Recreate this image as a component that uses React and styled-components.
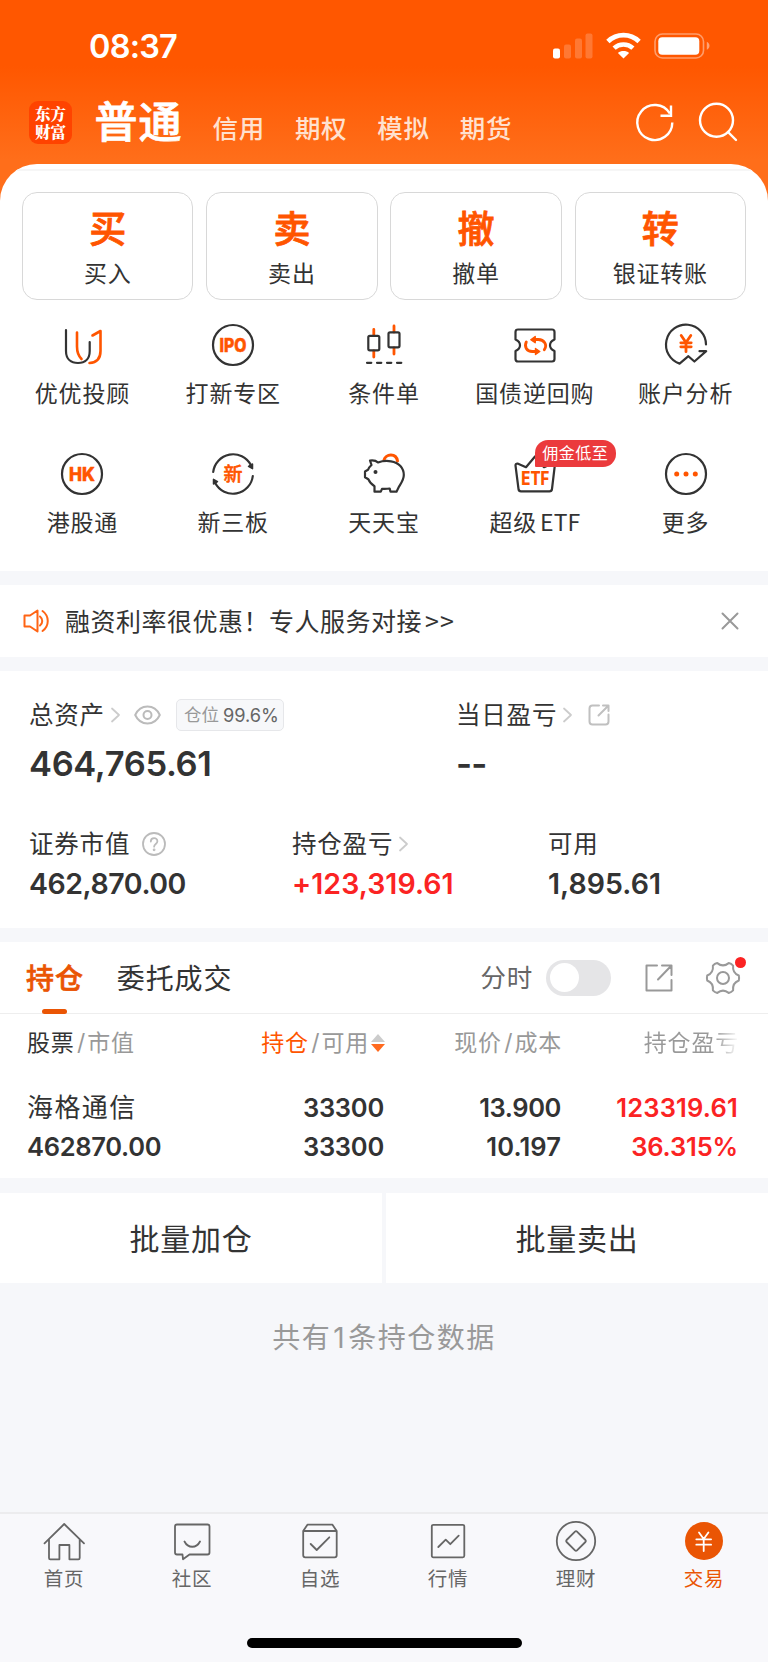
import styled, { createGlobalStyle, css } from "styled-components";

const GlobalStyle = createGlobalStyle`
  * {
    box-sizing: border-box;
  }
  body {
    margin: 0;
    background-color: #f6f7fa;
    color: #333333;
    font-family: Inter, "Noto Sans CJK SC", sans-serif;
  }
`;

const Page = styled.div`
  width: 768px;
  height: 1662px;
  display: flex;
  flex-direction: column;
  overflow: hidden;
`;

/* ---------- 상단 ---------- */
const Hero = styled.div`
  height: 571px;
  flex-shrink: 0;
  display: flex;
  flex-direction: column;
  background: linear-gradient(
    180deg,
    #ff5700 0,
    #ff5700 66px,
    #ff6e1a 160px,
    #ff6e1a 100%
  );
`;

const StatusBar = styled.div`
  height: 90px;
  display: flex;
  justify-content: space-between;
  align-items: center;
  padding: 1px 58px 0 89px;
`;

const Clock = styled.div`
  padding-top: 1px;
  color: #ffffff;
  font-size: 32.5px;
  font-weight: 600;
  letter-spacing: -0.8px;
`;

const NavBar = styled.div`
  height: 74px;
  display: flex;
  align-items: flex-start;
  padding: 0 30px 0 29px;
`;

const Logo = styled.div`
  width: 43px;
  height: 43px;
  margin-top: 11px;
  border-radius: 9px;
  background-color: #ff4300;
  color: #ffffff;
  text-align: center;
  padding-top: 3px;
  font-family: "Noto Serif CJK SC", "Noto Sans CJK SC", serif;
  font-size: 15.5px;
  font-weight: 900;
  line-height: 18px;
`;

const NavTitle = styled.div`
  margin: 4px 0 0 22.5px;
  color: #ffffff;
  font-size: 43px;
  font-weight: 500;
  line-height: 56px;
  letter-spacing: 1px;
  -webkit-text-stroke: 0.8px #ffffff;
`;

const NavTabs = styled.div`
  display: flex;
  gap: 30px;
  margin: 21px 0 0 30px;
`;

const NavTab = styled.div`
  color: #ffe1cf;
  font-size: 25.5px;
  font-weight: 500;
  line-height: 36px;
  letter-spacing: 0.7px;
`;

const NavIcons = styled.div`
  display: flex;
  gap: 20px;
  margin: 11px 0 0 auto;
`;

const Sheet = styled.div`
  flex: 1;
  background-color: #ffffff;
  border-radius: 37px 37px 0 0;
  overflow: hidden;
`;

const SheetEdge = styled.div`
  height: 7px;
  border-bottom: 2px solid #f6f6f6;
`;

const TradeGrid = styled.div`
  display: grid;
  grid-template-columns: repeat(4, 1fr);
  gap: 12.7px;
  padding: 0 22px;
  margin-top: 21px;
`;

const TradeButton = styled.div`
  height: 107.5px;
  border: 1px solid #d8d8d8;
  border-radius: 15px;
  padding-top: 15px;
  display: flex;
  flex-direction: column;
  align-items: center;
`;

const TradeChar = styled.div`
  color: #ff5500;
  font-size: 37px;
  font-weight: 500;
  line-height: 44px;
  -webkit-text-stroke: 0.8px #ff5500;
`;

const Label = styled.div`
  font-size: 23px;
  line-height: 30px;
  letter-spacing: 0.8px;
  white-space: nowrap;
`;

const TradeLabel = styled(Label)`
  margin-top: 7px;
`;

const FuncGrid = styled.div`
  display: grid;
  grid-template-columns: repeat(5, 1fr);
  grid-auto-rows: 129.3px;
  padding: 0 7px;
  margin-top: 24px;
`;

const FuncItem = styled.div`
  display: flex;
  flex-direction: column;
  align-items: center;
`;

const FuncIcon = styled.div`
  position: relative;
  width: 42px;
  height: 42px;
  margin-bottom: 13.5px;
`;

const Badge = styled.div`
  position: absolute;
  left: 21px;
  top: -13px;
  width: 81px;
  height: 27px;
  border-radius: 13px 13px 13px 1px;
  background-color: #eb3a3c;
  color: #ffffff;
  font-size: 16px;
  line-height: 27px;
  letter-spacing: 0.5px;
  text-align: center;
  white-space: nowrap;
`;

const LatinThin = styled.span`
  font-family: "Noto Sans CJK SC", sans-serif;
  line-height: 0;
  margin-left: 3px;
  letter-spacing: ${({ $track }) => $track || 0}px;
`;

/* ---------- 공지 ---------- */
const Notice = styled.div`
  height: 72px;
  flex-shrink: 0;
  margin-top: 14px;
  padding: 0 29px 0 23px;
  background-color: #ffffff;
  display: flex;
  align-items: center;
`;

const NoticeText = styled.div`
  flex: 1;
  margin-left: 16px;
  padding-top: 1px;
  font-size: 25px;
  line-height: 36px;
  letter-spacing: 0.5px;
`;

/* ---------- 자산 ---------- */
const Assets = styled.div`
  height: 257px;
  flex-shrink: 0;
  margin-top: 14px;
  padding: 24px 0 0 29px;
  background-color: #ffffff;
`;

const AssetRow = styled.div`
  display: grid;
  grid-template-columns: ${({ $cols }) => $cols};
  margin-top: ${({ $top }) => $top || 0}px;
`;

const AssetLabel = styled.div`
  height: 40px;
  display: flex;
  align-items: center;
  font-size: 24.5px;
  line-height: 39px;
  letter-spacing: 0.8px;
`;

const AssetValue = styled.div`
  font-weight: 600;
  ${({ $big }) =>
    $big
      ? css`
          font-size: 34.5px;
          line-height: 50px;
          margin-top: 4px;
        `
      : css`
          font-size: 28.5px;
          line-height: 40px;
        `}
  letter-spacing: ${({ $track }) => $track || 0}px;
  color: ${({ $red }) => ($red ? "#fb2323" : "#333333")};
`;

const Position = styled.div`
  height: 32px;
  margin-left: 15px;
  padding: 0 4px 0 7px;
  border: 1px solid #e6e7ea;
  border-radius: 5px;
  background-color: #f7f8fa;
  display: flex;
  align-items: center;
  gap: 4px;
  color: #999999;
  font-size: 17.5px;
  line-height: 30px;
  letter-spacing: 0;
`;

const PositionRate = styled.span`
  color: #666666;
  font-size: 18.2px;
`;

/* ---------- 보유 종목 ---------- */
const Holdings = styled.div`
  height: 236px;
  flex-shrink: 0;
  margin-top: 14px;
  background-color: #ffffff;
`;

const HoldTabs = styled.div`
  height: 72px;
  border-bottom: 1px solid #eeeeee;
  display: flex;
  align-items: center;
  padding: 0 27px 0 26px;
`;

const HoldTab = styled.div`
  position: relative;
  height: 72px;
  padding-top: 1px;
  margin-right: 33px;
  font-size: 28px;
  line-height: 72px;
  letter-spacing: 0.9px;
  color: ${({ $active }) => ($active ? "#ea5504" : "#333333")};
  font-weight: ${({ $active }) => ($active ? 500 : 400)};
  -webkit-text-stroke: ${({ $active }) => ($active ? "0.6px #ea5504" : "0")};
  &::after {
    content: "";
    display: ${({ $active }) => ($active ? "block" : "none")};
    position: absolute;
    left: 16px;
    bottom: 0;
    width: 25px;
    height: 5px;
    border-radius: 2.5px;
    background-color: #ea5504;
  }
`;

const HoldTools = styled.div`
  margin-left: auto;
  display: flex;
  align-items: center;
  color: #666666;
  font-size: 25.5px;
  line-height: 36px;
  letter-spacing: 0.8px;
`;

const Toggle = styled.div`
  width: 65px;
  height: 36px;
  margin: 0 34px 0 13px;
  padding: 3.5px;
  border-radius: 18px;
  background-color: #e5e5e7;
`;

const Knob = styled.div`
  width: 29px;
  height: 29px;
  border-radius: 50%;
  background-color: #ffffff;
`;

const GearWrap = styled.div`
  position: relative;
  width: 36px;
  height: 36px;
  margin-left: 32px;
`;

const RedDot = styled.div`
  position: absolute;
  right: -5px;
  top: -3px;
  width: 11px;
  height: 11px;
  border-radius: 50%;
  background-color: #fb2323;
`;

const TableRow = styled.div`
  display: grid;
  grid-template-columns: 234px 123px 177px 177px;
  padding-left: 27px;
`;

const TableHead = styled(TableRow)`
  height: 58px;
  align-items: center;
  font-size: 23px;
  line-height: 32px;
  letter-spacing: 0.8px;
  color: #999999;
`;

const HeadCell = styled.div`
  display: flex;
  align-items: center;
  justify-content: ${({ $left }) => ($left ? "flex-start" : "flex-end")};
  margin-right: -1px;
  white-space: nowrap;
`;

const HeadMain = styled.span`
  color: ${({ $color }) => $color};
`;

const Slash = styled.span`
  margin: 0 1px 0 2.5px;
`;

const FadeText = styled.span`
  color: transparent;
  background: linear-gradient(90deg, #999999 74%, #ffffff 100%);
  background-clip: text;
  -webkit-background-clip: text;
`;

const TableBody = styled(TableRow)`
  padding-top: 17px;
`;

const Cell = styled.div`
  font-size: 25.5px;
  font-weight: 600;
  line-height: 38.5px;
  text-align: ${({ $left }) => ($left ? "left" : "right")};
  color: ${({ $red }) => ($red ? "#fb2323" : "#333333")};
`;

const Num = styled.div`
  letter-spacing: ${({ $track }) => $track}px;
`;

const StockName = styled.div`
  font-size: 26px;
  font-weight: 400;
  letter-spacing: 1.4px;
`;

/* ---------- 하단 ---------- */
const BatchRow = styled.div`
  display: grid;
  grid-template-columns: 1fr 1fr;
  gap: 4px;
  height: 90px;
  margin-top: 15px;
  flex-shrink: 0;
`;

const BatchButton = styled.div`
  background-color: #ffffff;
  display: flex;
  align-items: center;
  justify-content: center;
  padding-top: 1px;
  font-size: 30px;
  line-height: 40px;
  letter-spacing: 0.8px;
`;

const CountText = styled.div`
  flex: 1;
  padding-top: 35px;
  text-align: center;
  color: #999999;
  font-size: 28px;
  line-height: 40px;
  letter-spacing: 1.5px;
`;

const CountNum = styled.span`
  margin: 0 2px;
`;

const TabBar = styled.div`
  height: 150px;
  flex-shrink: 0;
  border-top: 2px solid #ececee;
  background-color: #f8f8fb;
  display: flex;
  flex-direction: column;
  align-items: center;
`;

const TabList = styled.div`
  width: 100%;
  height: 124px;
  display: grid;
  grid-template-columns: repeat(6, 1fr);
`;

const TabItem = styled.div`
  padding-top: 6px;
  display: flex;
  flex-direction: column;
  align-items: center;
  color: ${({ $active }) => ($active ? "#ea5504" : "#666666")};
  font-size: 19.5px;
  line-height: 34px;
  letter-spacing: 0.7px;
`;

const HomeIndicator = styled.div`
  width: 275px;
  height: 10px;
  border-radius: 5px;
  background-color: #000000;
`;

const Svg = styled.svg`
  display: block;
  flex-shrink: 0;
  overflow: visible;
  fill: none;
  stroke: ${({ $stroke }) => $stroke || "#333333"};
  stroke-width: ${({ $w }) => $w || 2}px;
  stroke-linecap: round;
  stroke-linejoin: round;
  margin-left: ${({ $ml }) => $ml || 0}px;
`;

const IconText = styled.text`
  fill: #ff5500;
  stroke: ${({ $halo }) => ($halo ? "#ffffff" : "#ff5500")};
  stroke-width: ${({ $halo }) => ($halo ? 4 : 0.5)}px;
  paint-order: stroke;
  font-family: Inter, "Noto Sans CJK SC", sans-serif;
  font-weight: ${({ $weight }) => $weight || 800};
  text-anchor: middle;
`;

const ORANGE = "#ff5500";

const Box = ({ children, ...rest }) => (
  <Svg width="42" height="42" viewBox="0 0 42 42" $w={2.2} {...rest}>
    {children}
  </Svg>
);

const StatusIcons = () => (
  <Svg width="157" height="28" viewBox="0 0 157 28" $stroke="none">
    <g fill="#ffffff">
      <rect x="0" y="16.500" width="7" height="10" rx="2" />
      <rect x="11" y="12.500" width="7" height="14" rx="2" opacity="0.2" />
      <rect x="22" y="6.500" width="7" height="20" rx="2" opacity="0.2" />
      <rect x="32.500" y="1.500" width="7" height="25" rx="2" opacity="0.2" />
      <rect x="105.300" y="5.200" width="41" height="17.500" rx="4" />
      <path d="M153.800 9.800v8c3.600-1.600 3.600-6.400 0-8z" opacity="0.45" />
      <path d="M70.500 26.500l-5.600-5.600c3-2.600 8.200-2.600 11.200 0z" />
    </g>
    <g stroke="#ffffff" strokeLinecap="butt">
      <path d="M61.100 16.100c5.200-4.900 13.600-4.900 18.800 0" strokeWidth="4.600" />
      <path d="M54.900 9.500c8.800-8.400 22.400-8.400 31.200 0" strokeWidth="4.800" />
      <rect x="102" y="2" width="48.500" height="24" rx="7.500" strokeWidth="1.600" opacity="0.42" />
    </g>
  </Svg>
);

const YenPath = "M16.2 11.5 21 18.5l4.8-7M21 18.5v9.2M15.8 18.8h10.4M15.8 22.8h10.4";

const funcs = [
  {
    name: "优优投顾",
    icon: (
      <Box>
        <path d="M5 6v21c0 8 5 12 12 12s11.700-4 11.700-12V18" />
        <g stroke={ORANGE} strokeWidth="2.6">
          <path d="M16 8.500v14c0 6 1.500 9.500 4.500 12.500" />
          <path d="M28.500 39c7.500-.5 11-4.500 11-12V7l-8 4.500" />
        </g>
      </Box>
    ),
  },
  {
    name: "打新专区",
    icon: (
      <Box>
        <circle cx="21" cy="21" r="20" />
        <IconText x="21" y="27.700" fontSize="18.500" textLength="27" lengthAdjust="spacingAndGlyphs">
          IPO
        </IconText>
      </Box>
    ),
  },
  {
    name: "条件单",
    icon: (
      <Box>
        <path d="M10.800 5.500v6M10.800 27v6M31 2v6M31 24v6" stroke={ORANGE} strokeWidth="2.800" />
        <rect x="5.300" y="11.800" width="11" height="14.500" rx="1.500" />
        <rect x="25.500" y="8.300" width="11" height="15" rx="1.500" />
        <path d="M4 38.800h4.300M14 38.800h4.300M24 38.800h4.300M34 38.800h4.300" />
      </Box>
    ),
  },
  {
    name: "国债逆回购",
    icon: (
      <Box>
        <path d="M4 5.500h34q2.500 0 2.500 2.500v7.500q-4.500 2-4.500 5.800t4.500 5.800V35q0 2.500-2.500 2.500H4q-2.500 0-2.500-2.500v-7.900q4.500-2 4.500-5.800t-4.500-5.800V8q0-2.500 2.500-2.500z" />
        <g stroke={ORANGE} strokeWidth="2.800">
          <path d="M30.300 25.800c3.500-5.300-.3-10.300-6-10.300H21.500M12.300 18c-2.300 4.500.3 9.500 6 9.500H21.500" />
          <path d="M16.800 15.700l4.400-3.200v6.200zM25.800 27.500l-4.300-3v6z" fill={ORANGE} strokeWidth="1.400" />
        </g>
      </Box>
    ),
  },
  {
    name: "账户分析",
    icon: (
      <Box>
        <path d="M41 20.500A20 20 0 1 0 14.600 39.600l8.800-7.400 6 5.300L41.200 27.200H34.500" />
        <path d={YenPath} stroke={ORANGE} strokeWidth="2.800" />
      </Box>
    ),
  },
  {
    name: "港股通",
    icon: (
      <Box>
        <circle cx="21" cy="21" r="20" />
        <IconText x="21" y="27.600" fontSize="18.500" textLength="26" lengthAdjust="spacingAndGlyphs">
          HK
        </IconText>
      </Box>
    ),
  },
  {
    name: "新三板",
    icon: (
      <Box>
        <path d="M1.200 19A20 20 0 0 1 38.800 12M40.800 23A20 20 0 0 1 3.200 30" />
        <path d="M36.500 13.300l4-2.300v4.700zM5.500 28.700l-4 2.300v-4.700z" fill="#333333" strokeWidth="1.500" />
        <IconText x="21" y="28" fontSize="19" $weight={500}>
          新
        </IconText>
      </Box>
    ),
  },
  {
    name: "天天宝",
    icon: (
      <Box>
        <path d="M21 7c1.500-6 12-7.500 13.500 1" stroke={ORANGE} strokeWidth="3" />
        <path d="M7 7.500c3.500-.5 6 0 8 2 4-1.500 8-2 13-1.200 8 1.200 12.800 7 12.800 13.700 0 5-3 8.500-5 12l-2.300 4.700h-6l-.8-3.200c-3 .5-5.500.5-7.700.3l-1.200 2.900h-6.300v-5.500c-3-1.800-5-4-6.200-7l-3.300-2v-5.700l3-1.700c.7-2 2-3.500 3.500-4.800z" />
        <circle cx="12.500" cy="19" r="2" fill="#333333" stroke="none" />
      </Box>
    ),
  },
  {
    name: "超级",
    latin: "ETF",
    badge: "佣金低至",
    icon: (
      <Box>
        <path d="M3.500 10.500l8.500 3.700L21 3.500l9 10.700 8.500-3.700q2.500-.5 2.300 2L38 36q-.3 2.300-2.500 2.300H7Q4.800 38.300 4.500 36L1.500 12.500q0-2 2-2z" />
        <IconText x="21.300" y="31.700" fontSize="18.500" textLength="28" lengthAdjust="spacingAndGlyphs" $halo>
          ETF
        </IconText>
      </Box>
    ),
  },
  {
    name: "更多",
    icon: (
      <Box>
        <circle cx="21" cy="21" r="20" />
        <g fill={ORANGE} stroke="none">
          <circle cx="11.700" cy="21" r="2.500" />
          <circle cx="21" cy="21" r="2.500" />
          <circle cx="30.300" cy="21" r="2.500" />
        </g>
      </Box>
    ),
  },
];

const trades = [
  ["买", "买入"],
  ["卖", "卖出"],
  ["撤", "撤单"],
  ["转", "银证转账"],
];

const tabs = [
  {
    name: "首页",
    icon: (
      <path d="M1.500 23.300 21.200 4 41 23.300M6 19.500V38q0 1.300 1.300 1.300H16.400V25h10V39.300h9q1.300 0 1.300-1.300V19.500" />
    ),
  },
  {
    name: "社区",
    icon: (
      <path d="M6 4.500h30.500q2 0 2 2v26q0 2-2 2H18.500L12 39.200l-.5-4.700H6q-2 0-2-2v-26q0-2 2-2zM13.500 21.500c3.500 7 12 7 15.500 0" />
    ),
  },
  {
    name: "自选",
    icon: (
      <path d="M4.200 11 8.600 4.600H33.300L37.700 11M4.200 11H37.700V35.300q0 2-2 2H6.200q-2 0-2-2zM11.700 24l6 6L30.300 17.300" />
    ),
  },
  {
    name: "行情",
    icon: (
      <>
        <rect x="4.800" y="4.800" width="32.500" height="32.500" rx="1.500" />
        <path d="M11.300 27l7.400-7.300 4.600 4.500 8.400-8.500" />
      </>
    ),
  },
  {
    name: "理财",
    icon: (
      <>
        <circle cx="21" cy="21" r="19.200" />
        <path d="M20 11.600q1-1 2 0l8.400 8.400q1 1 0 2L22 30.400q-1 1-2 0L11.600 22q-1-1 0-2z" />
      </>
    ),
  },
  {
    name: "交易",
    active: true,
    icon: (
      <>
        <circle cx="21" cy="21" r="19" fill="#ea5504" stroke="none" />
        <path d="M16 12.500l4.700 6.500 4.700-6.500M20.700 19v12M13.300 19.300h14.800M13.300 24.700h14.800" stroke="#ffffff" />
      </>
    ),
  },
];

const Chevron = () => (
  <Svg width="9" height="16" viewBox="0 0 9 16" $stroke="#cccccc" $ml={6} $w={1.8}>
    <path d="M1 1.500l7 6.500-7 6.500" />
  </Svg>
);

const Eye = () => (
  <Svg width="27" height="20" viewBox="0 0 27 20" $stroke="#bbbbbb" $ml={14}>
    <path d="M1.200 10C6.500-1.300 20.500-1.300 25.800 10 20.500 21.300 6.500 21.300 1.200 10z" />
    <circle cx="13.500" cy="10" r="4" />
  </Svg>
);

const Question = () => (
  <Svg width="24" height="24" viewBox="0 0 24 24" $stroke="#bbbbbb" $ml={12} $w={1.8}>
    <circle cx="12" cy="12" r="11" />
    <path d="M8.800 9.500c0-4.500 6.600-4.500 6.600-.2 0 2.700-3.300 2.700-3.300 5.400" />
    <circle cx="12.100" cy="17.800" r="0.500" fill="#bbbbbb" />
  </Svg>
);

const Share = () => (
  <Svg width="22" height="22" viewBox="0 0 22 22" $stroke="#c0c0c0" $ml={16}>
    <path d="M11 1.500H4.500Q1.500 1.500 1.500 4.500v13q0 3 3 3H17.500q3 0 3-3V10.500M15 1.500H20.500v5.500M20.500 1.500L10.500 11.500" />
  </Svg>
);

function App() {
  return (
    <>
      <GlobalStyle />
      <Page>
        <Hero>
          <StatusBar>
            <Clock>08:37</Clock>
            <StatusIcons />
          </StatusBar>
          <NavBar>
            <Logo>
              东方
              <br />
              财富
            </Logo>
            <NavTitle>普通</NavTitle>
            <NavTabs>
              {["信用", "期权", "模拟", "期货"].map((tab) => (
                <NavTab key={tab}>{tab}</NavTab>
              ))}
            </NavTabs>
            <NavIcons>
              <Box $stroke="#ffffff" $w={2.4}>
                <path d="M38.300 21.500A17.500 17.500 0 1 1 35.800 12.500M37 4.500v10.200H26.500" strokeLinecap="butt" strokeLinejoin="miter" />
              </Box>
              <Box $stroke="#ffffff" $w={2.4}>
                <circle cx="20.500" cy="19.300" r="16.500" />
                <path d="M32 31l8 8" />
              </Box>
            </NavIcons>
          </NavBar>
          <Sheet>
            <SheetEdge />
            <TradeGrid>
              {trades.map(([char, name]) => (
                <TradeButton key={name}>
                  <TradeChar>{char}</TradeChar>
                  <TradeLabel>{name}</TradeLabel>
                </TradeButton>
              ))}
            </TradeGrid>
            <FuncGrid>
              {funcs.map((item) => (
                <FuncItem key={item.name}>
                  <FuncIcon>
                    {item.icon}
                    {item.badge && <Badge>{item.badge}</Badge>}
                  </FuncIcon>
                  <Label>
                    {item.name}
                    {item.latin && <LatinThin>{item.latin}</LatinThin>}
                  </Label>
                </FuncItem>
              ))}
            </FuncGrid>
          </Sheet>
        </Hero>

        <Notice>
          <Svg width="26" height="24" viewBox="0 0 26 24" $stroke="#ff6414" $w={2}>
            <path d="M1.500 6.500h5.500L14.500 1.500v21L7 17.500H1.500zM17 7.500c3 2.500 3 6.500 0 9M19.500 2c7 5 7 15 0 20" />
          </Svg>
          <NoticeText>
            融资利率很优惠！专人服务对接
            <LatinThin $track={1}>&gt;&gt;</LatinThin>
          </NoticeText>
          <Svg width="18" height="18" viewBox="0 0 18 18" $stroke="#999999">
            <path d="M1.500 1.500l15 15M16.500 1.500l-15 15" />
          </Svg>
        </Notice>

        <Assets>
          <AssetRow $cols="427px 1fr">
            <div>
              <AssetLabel>
                总资产
                <Chevron />
                <Eye />
                <Position>
                  仓位 <PositionRate>99.6%</PositionRate>
                </Position>
              </AssetLabel>
              <AssetValue $big $track={-0.35}>
                464,765.61
              </AssetValue>
            </div>
            <div>
              <AssetLabel>
                当日盈亏
                <Chevron />
                <Share />
              </AssetLabel>
              <AssetValue $big $track={-0.8}>
                --
              </AssetValue>
            </div>
          </AssetRow>
          <AssetRow $cols="263px 256px 1fr" $top={35}>
            <div>
              <AssetLabel>
                证券市值
                <Question />
              </AssetLabel>
              <AssetValue $track={-0.45}>462,870.00</AssetValue>
            </div>
            <div>
              <AssetLabel>
                持仓盈亏
                <Chevron />
              </AssetLabel>
              <AssetValue $red $track={0.05}>
                +123,319.61
              </AssetValue>
            </div>
            <div>
              <AssetLabel>可用</AssetLabel>
              <AssetValue $track={0.05}>1,895.61</AssetValue>
            </div>
          </AssetRow>
        </Assets>

        <Holdings>
          <HoldTabs>
            <HoldTab $active>持仓</HoldTab>
            <HoldTab>委托成交</HoldTab>
            <HoldTools>
              分时
              <Toggle>
                <Knob />
              </Toggle>
              <Svg width="28" height="28" viewBox="0 0 28 28" $stroke="#999999">
                <path d="M12 1.500H1.500v25h25V16M17 1.500h9.500v9.500M26.500 1.500L13 15.500" />
              </Svg>
              <GearWrap>
                <Svg width="36" height="36" viewBox="0 0 36 36" $stroke="#999999">
                  <path d="M23.700 3.100q2.700.6 4.400 2.500-.8 7.400 5.700 9.900.6 2.500 0 5-6.500 2.500-5.700 9.900-1.700 1.900-4.400 2.500-5.700-4.600-11.400 0-2.700-.6-4.400-2.500.8-7.400-5.700-9.900-.6-2.500 0-5 6.500-2.500 5.700-9.900 1.700-1.900 4.400-2.500 5.700 4.600 11.400 0z" />
                  <circle cx="18" cy="18" r="6" />
                </Svg>
                <RedDot />
              </GearWrap>
            </HoldTools>
          </HoldTabs>
          <TableHead>
            <HeadCell $left>
              <HeadMain $color="#333333">股票</HeadMain>
              <Slash>/</Slash>市值
            </HeadCell>
            <HeadCell>
              <HeadMain $color="#ff5500">持仓</HeadMain>
              <Slash>/</Slash>可用
              <Svg width="14" height="20" viewBox="0 0 14 20" $stroke="none" $ml={2}>
                <path d="M0 9 7 1l7 8z" fill="#cccccc" />
                <path d="M0 11h14l-7 8z" fill="#ff6a1f" />
              </Svg>
            </HeadCell>
            <HeadCell>
              现价<Slash>/</Slash>成本
            </HeadCell>
            <HeadCell>
              <FadeText>持仓盈亏</FadeText>
            </HeadCell>
          </TableHead>
          <TableBody>
            <Cell $left>
              <StockName>海格通信</StockName>
              <Num $track={-0.3}>462870.00</Num>
            </Cell>
            <Cell>
              <Num $track={-0.25}>33300</Num>
              <Num $track={-0.25}>33300</Num>
            </Cell>
            <Cell>
              <Num $track={-0.4}>13.900</Num>
              <Num $track={0.1}>10.197</Num>
            </Cell>
            <Cell $red>
              <Num $track={0.2}>123319.61</Num>
              <Num $track={-0.15}>36.315%</Num>
            </Cell>
          </TableBody>
        </Holdings>

        <BatchRow>
          <BatchButton>批量加仓</BatchButton>
          <BatchButton>批量卖出</BatchButton>
        </BatchRow>
        <CountText>
          共有<CountNum>1</CountNum>条持仓数据
        </CountText>

        <TabBar>
          <TabList>
            {tabs.map((tab) => (
              <TabItem key={tab.name} $active={tab.active}>
                <Box $stroke="#666666" $w={1.8}>
                  {tab.icon}
                </Box>
                {tab.name}
              </TabItem>
            ))}
          </TabList>
          <HomeIndicator />
        </TabBar>
      </Page>
    </>
  );
}

export default App;
